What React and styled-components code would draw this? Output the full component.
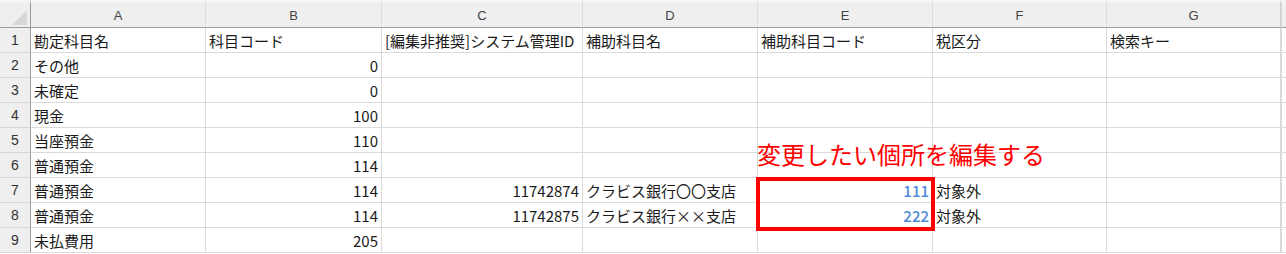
import React from "react";
import styled, { createGlobalStyle } from "styled-components";

const GlobalStyle = createGlobalStyle`
  html, body {
    margin: 0;
    padding: 0;
    background: #ffffff;
  }
  body {
    font-family: "Noto Sans CJK JP", "Noto Sans", sans-serif;
  }
`;

const Wrapper = styled.div`
  position: relative;
  width: 1286px;
  height: 254px;
  overflow: hidden;
  background: #ffffff;
`;

const Grid = styled.div`
  display: grid;
  grid-template-columns: 31px 175px 176px 201px 175px 175px 174px 174px 1fr;
  grid-template-rows: 28px repeat(9, 25px);
`;

const ColHead = styled.div`
  box-sizing: border-box;
  background: #efefef;
  border-top: 3px solid #f5f5f5;
  border-right: 1px solid ${(p) => (p.$last ? "#cfcfcf" : "#dcdcdc")};
  border-bottom: 1px solid #9b9b9b;
  display: flex;
  align-items: center;
  justify-content: center;
  font-family: "Liberation Sans", Arial, sans-serif;
  font-size: 13px;
  color: #444444;
`;

const Corner = styled(ColHead)`
  border-right: 1px solid #9b9b9b;
  align-items: flex-end;
  justify-content: flex-end;
`;

const Triangle = styled.span`
  width: 15px;
  height: 15px;
  margin: 0 3px 2px 0;
  background: #d7d7d7;
  clip-path: polygon(100% 0, 100% 100%, 0 100%);
`;

const RowHead = styled.div`
  box-sizing: border-box;
  background: #efefef;
  border-right: 1px solid #9b9b9b;
  border-bottom: 1px solid #d6d6d6;
  display: flex;
  align-items: center;
  justify-content: center;
  font-family: "Liberation Sans", Arial, sans-serif;
  font-size: 14px;
  color: #333333;
`;

const Cell = styled.div`
  box-sizing: border-box;
  border-right: 1px solid #dadada;
  border-bottom: 1px solid #dadada;
  display: flex;
  align-items: center;
  justify-content: ${(p) => (p.$num ? "flex-end" : "flex-start")};
  padding: 0 ${(p) => (p.$num ? "3px" : "0")} 0 ${(p) => (p.$num ? "0" : "3px")};
  font-size: 15px;
  color: ${(p) => (p.$blue ? "#4f8ad6" : "#1a1a1a")};
  font-weight: ${(p) => (p.$blue ? 500 : 400)};
  white-space: nowrap;
  overflow: hidden;
`;

const Filler = styled.div`
  box-sizing: border-box;
  border-left: 1px solid #dadada;
  border-bottom: ${(p) => (p.$head ? "1px solid #9b9b9b" : "1px solid #dadada")};
  background: ${(p) => (p.$head ? "#efefef" : "#ffffff")};
  border-top: ${(p) => (p.$head ? "3px solid #f5f5f5" : "0")};
`;

const Note = styled.div`
  position: absolute;
  left: 757px;
  top: 139px;
  font-size: 24px;
  line-height: 30px;
  color: #ff0000;
  white-space: nowrap;
`;

const Highlight = styled.div`
  position: absolute;
  left: 756px;
  top: 177px;
  width: 179px;
  height: 54px;
  box-sizing: border-box;
  border: 4px solid #ff0000;
`;

const columns = ["A", "B", "C", "D", "E", "F", "G"];

// each row: [A, B, C, D, E, F, G]; numbers are right aligned
const rows = [
  ["勘定科目名", "科目コード", "[編集非推奨]システム管理ID", "補助科目名", "補助科目コード", "税区分", "検索キー"],
  ["その他", 0],
  ["未確定", 0],
  ["現金", 100],
  ["当座預金", 110],
  ["普通預金", 114],
  ["普通預金", 114, 11742874, "クラビス銀行〇〇支店", 111, "対象外"],
  ["普通預金", 114, 11742875, "クラビス銀行××支店", 222, "対象外"],
  ["未払費用", 205],
];

const App = () => {
  return (
    <>
      <GlobalStyle />
      <Wrapper>
        <Grid>
          <Corner>
            <Triangle />
          </Corner>
          {columns.map((c, i) => (
            <ColHead key={c} $last={i === columns.length - 1}>
              {c}
            </ColHead>
          ))}
          <Filler $head />

          {rows.map((row, r) => (
            <React.Fragment key={r}>
              <RowHead>{r + 1}</RowHead>
              {columns.map((c, i) => {
                const v = row[i];
                const isNum = typeof v === "number";
                return (
                  <Cell key={c} $num={isNum} $blue={isNum && i === 4}>
                    {v !== undefined ? v : ""}
                  </Cell>
                );
              })}
              <Filler />
            </React.Fragment>
          ))}
        </Grid>
        <Note>変更したい個所を編集する</Note>
        <Highlight />
      </Wrapper>
    </>
  );
};

export default App;
